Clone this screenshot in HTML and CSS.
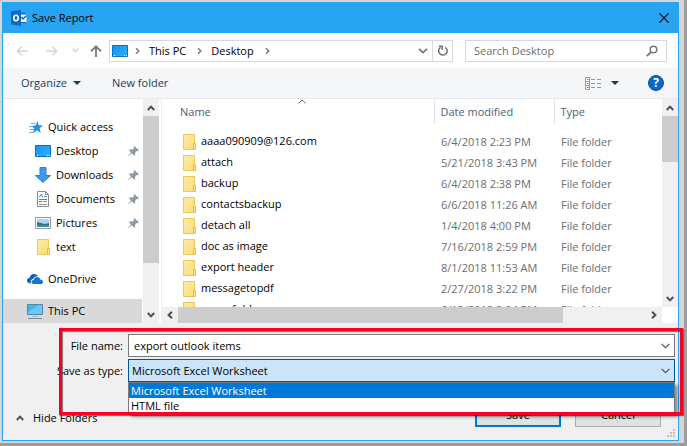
FILE: index.html
```
<!DOCTYPE html>
<html lang="en">
<head>
  <meta charset="UTF-8">
  <meta name="viewport" content="width=device-width, initial-scale=1.0">
  <title>Save Report</title>
  <link rel="stylesheet" href="styles.css">
</head>
<body>
  <!-- Shared icons -->
  <svg class="sprite" aria-hidden="true">
    <defs>
      <linearGradient id="folderFill" x1="0" y1="0" x2="1" y2="1">
        <stop offset="0" stop-color="#ffeba6"/>
        <stop offset="1" stop-color="#fbdc78"/>
      </linearGradient>
      <linearGradient id="screenFill" x1="0" y1="0" x2="1" y2="1">
        <stop offset="0" stop-color="#1793f3"/>
        <stop offset="1" stop-color="#2fb0ff"/>
      </linearGradient>
    </defs>
    <symbol id="folder" viewBox="0 0 13 16">
      <path d="M.5 .5h11v15H.5z" fill="url(#folderFill)" stroke="#ecc75a"/>
      <path d="M10.5 9.5h2v6h-2z" fill="#fde79c" stroke="#e8bd45"/>
    </symbol>
    <symbol id="desktop" viewBox="0 0 16 12">
      <path d="M.5 .5h15v11H.5z" fill="url(#screenFill)" stroke="#0b72bd"/>
      <path d="M2 10.5h1M12 10.5h1M14 10.5h1" stroke="#fff"/>
    </symbol>
    <symbol id="pin" viewBox="0 0 12 12">
      <path d="M7 0l5 5-1.500.600-.8-.3-2 2 .1 2.200-1 1L4 7.800 0 11.500 .3 10.500 3.300 7 1 4.700l1-1 2.700.2 2-2-.3-.8z" fill="#8b9aa6"/>
    </symbol>
    <symbol id="up" viewBox="0 0 8 6">
      <path d="M.8 5L4 1.600 7.200 5" fill="none" stroke="#505050" stroke-width="2"/>
    </symbol>
    <symbol id="down" viewBox="0 0 8 6">
      <path d="M.8 1L4 4.400 7.200 1" fill="none" stroke="#505050" stroke-width="2"/>
    </symbol>
    <symbol id="left" viewBox="0 0 6 8">
      <path d="M5 .8L1.600 4 5 7.200" fill="none" stroke="#505050" stroke-width="2"/>
    </symbol>
    <symbol id="right" viewBox="0 0 6 8">
      <path d="M1 .8L4.400 4 1 7.200" fill="none" stroke="#505050" stroke-width="2"/>
    </symbol>
    <symbol id="crumb" viewBox="0 0 5 6">
      <path d="M1 .3L3.800 3 1 5.700" fill="none" stroke="#777" stroke-width="1.500"/>
    </symbol>
    <symbol id="caret" viewBox="0 0 8 4">
      <path d="M0 0h8L4 4z" fill="#1d3557"/>
    </symbol>
    <symbol id="thin-down" viewBox="0 0 9 6">
      <path d="M.6 .8l3.900 3.900L8.400 .8" fill="none" stroke="#555" stroke-width="1.200"/>
    </symbol>
  </svg>

  <div class="backdrop">
    <div class="window">
      <header class="titlebar">
        <svg class="app-icon" width="16" height="16" viewBox="0 0 16 16">
          <path d="M8 3h7.500v10H8z" fill="#fff"/>
          <path d="M8 3h7.500v1.500H8zM8 12h7.500v1H8z" fill="#0a64b4"/>
          <path d="M10.500 7l1.500 2 3.500-3.500" fill="none" stroke="#0a64b4" stroke-width="1.400"/>
          <path d="M0 1.500L10 0v16L0 14.500z" fill="#0a6cc0"/>
          <ellipse cx="5" cy="8" rx="2.200" ry="2.700" fill="none" stroke="#fff" stroke-width="1.600"/>
        </svg>
        <h1>Save Report</h1>
        <button class="close" type="button" aria-label="Close">
          <svg width="10" height="10" viewBox="0 0 10 10"><path d="M0 0l10 10M10 0L0 10" stroke="#111" stroke-width="1.200"/></svg>
        </button>
      </header>

      <nav class="navbar">
        <button class="nav-btn" type="button" aria-label="Back">
          <svg width="12" height="10" viewBox="0 0 12 10"><path d="M12 5H1.500M5.500 .8L1.300 5l4.200 4.200" fill="none" stroke="#d6d6d6" stroke-width="1.600"/></svg>
        </button>
        <button class="nav-btn forward" type="button" aria-label="Forward">
          <svg width="12" height="10" viewBox="0 0 12 10"><path d="M0 5h10.500M6.500 .8L10.700 5 6.500 9.200" fill="none" stroke="#d6d6d6" stroke-width="1.600"/></svg>
        </button>
        <button class="nav-btn recent" type="button" aria-label="Recent locations">
          <svg width="7" height="5" viewBox="0 0 7 5"><path d="M.6 .8l2.900 2.900L6.400 .8" fill="none" stroke="#d0d0d0" stroke-width="1.400"/></svg>
        </button>
        <button class="nav-btn" type="button" aria-label="Up">
          <svg width="12" height="12" viewBox="0 0 12 12"><path d="M6 12V1.500M1 6.300L6 1.300l5 5" fill="none" stroke="#777" stroke-width="1.800"/></svg>
        </button>
        <div class="address">
          <svg width="16" height="12"><use href="#desktop"/></svg>
          <svg width="5" height="6"><use href="#crumb"/></svg>
          <a href="#">This PC</a>
          <svg width="5" height="6"><use href="#crumb"/></svg>
          <a href="#">Desktop</a>
          <svg width="5" height="6"><use href="#crumb"/></svg>
          <button class="history" type="button" aria-label="Previous locations">
            <svg width="10" height="6" viewBox="0 0 10 6"><path d="M1 .8l4 3.800L9 .8" fill="none" stroke="#777" stroke-width="1.800"/></svg>
          </button>
          <button class="refresh" type="button" aria-label="Refresh">
            <svg width="10" height="11" viewBox="0 0 10 11"><path d="M7.200 2.300A4.200 4.200 0 1 1 2.500 2.400M1 1.200h3.200v3.500" fill="none" stroke="#777" stroke-width="1.600"/></svg>
          </button>
        </div>
        <div class="search">
          <input type="text" placeholder="Search Desktop" aria-label="Search Desktop">
          <svg width="12" height="12" viewBox="0 0 12 12"><circle cx="7.500" cy="4.500" r="3.300" fill="none" stroke="#777" stroke-width="1.500"/><path d="M5 7L.8 11.200" stroke="#777" stroke-width="1.900"/></svg>
        </div>
      </nav>

      <div class="toolbar">
        <button class="organize" type="button">Organize <svg width="8" height="4"><use href="#caret"/></svg></button>
        <button type="button">New folder</button>
        <button class="view" type="button" aria-label="Change your view">
          <svg width="17" height="13" viewBox="0 0 17 13">
            <path d="M.5 .5h4v12h-4z" fill="#fff" stroke="#999"/>
            <path d="M.5 4.500h4M.5 8.500h4" stroke="#999"/>
            <path d="M2 2.500h1.500" stroke="#4f9a68"/><path d="M2 6.500h1.500" stroke="#2d7df0"/><path d="M2 10.500h1.500" stroke="#e02c2c"/>
            <path d="M6 2.500h4M12 2.500h4M6 6.500h4M12 6.500h4M6 10.500h4M12 10.500h4" stroke="#999"/>
          </svg>
          <svg width="8" height="4"><use href="#caret"/></svg>
        </button>
        <button class="help" type="button" aria-label="Help">?</button>
      </div>

      <main class="browser">
        <ul class="tree">
          <li class="top"><svg width="14" height="13" viewBox="0 0 14 13"><path d="M8.500 0l1.200 4.200L14 4.400l-3.400 2.800 1.200 4.800L8 9.300 4 12.600l1.300-4.800L2.500 5l4-.5z" fill="#1e90e8"/><path d="M2 2.500h4M0 5.500h4M1 8.500h4M0 11.500h4" stroke="#5bb2f0"/></svg>Quick access</li>
          <li><svg width="16" height="12"><use href="#desktop"/></svg>Desktop<svg class="pin" width="11" height="11"><use href="#pin"/></svg></li>
          <li><svg width="16" height="16" viewBox="0 0 16 16"><path d="M5 .5h6v8h4.500L8 15.500 .5 8.500H5z" fill="#3f98e8" stroke="#2d80cf"/></svg>Downloads<svg class="pin" width="11" height="11"><use href="#pin"/></svg></li>
          <li><svg width="16" height="16" viewBox="0 0 16 16"><path d="M2.500 .5h8l3 3v12h-11z" fill="#fff" stroke="#8a8a8a"/><path d="M10.500 .5v3h3" fill="none" stroke="#8a8a8a"/><path d="M4 6.500L6.500 3l1 3.500M9 5.500h3M4 8.500h8M4 10.500h3" fill="none" stroke="#2f8fd0"/><path d="M8 10.500h4M4 13.500h8" stroke="#909090"/></svg>Documents<svg class="pin" width="11" height="11"><use href="#pin"/></svg></li>
          <li><svg width="16" height="12" viewBox="0 0 16 12"><path d="M.5 .5h15v11H.5z" fill="#fff" stroke="#999"/><path d="M2 2h12v8H2z" fill="#a9d8f5"/><path d="M2 5l4 1 4 1 4-1v4H2z" fill="#38746e"/><path d="M2 8h7l5 .5V10H2z" fill="#3d8cc0"/></svg>Pictures<svg class="pin" width="11" height="11"><use href="#pin"/></svg></li>
          <li><svg class="tree-folder" width="13" height="16"><use href="#folder"/></svg>text</li>
          <li class="top group"><svg width="16" height="10" viewBox="0 0 16 10"><path d="M4 9.500C1 9.500 0 8 0 6.500S1 4 2.500 4C3 1.500 5 0 7 0c2 0 3.500 1 4.200 2.500C9 2 7 3 6 5 4 5 3.200 7.500 4 9.500z" fill="#0c5fb5"/><path d="M6.800 10C5 10 4.500 9 4.500 8S5.300 6 6.600 6C7 4 8.500 3 10 3c2 0 3 1.200 3.300 2.500C15 5.600 16 6.600 16 8s-1 2-2.200 2z" fill="#1474d4"/></svg>OneDrive</li>
          <li class="top group selected"><svg width="16" height="15" viewBox="0 0 16 15"><path d="M.5 .5h15v10H.5z" fill="#42b4f3" stroke="#5d8199"/><path d="M1 8L12 1h3v9H1z" fill="#68c8f8"/><path d="M5 12.500h6" stroke="#a3bccc"/><path d="M1 14.500h14" stroke="#6e8fa5"/></svg>This PC</li>
        </ul>
        <div class="scroll-v tree-scroll">
          <span class="arrow"><svg width="8" height="6"><use href="#up"/></svg></span>
          <span class="thumb"></span>
          <span class="arrow"><svg width="8" height="6"><use href="#down"/></svg></span>
        </div>

        <section class="files">
          <div class="file-list">
            <table>
              <colgroup><col><col class="col-date"><col class="col-type"></colgroup>
              <thead>
                <tr>
                  <th>Name<svg class="sort" width="8" height="5" viewBox="0 0 8 5"><path d="M.4 4.500L4 .9l3.600 3.600" fill="none" stroke="#666"/></svg></th>
                  <th>Date modified</th>
                  <th>Type</th>
                </tr>
              </thead>
              <tbody>
                <tr><td><svg width="13" height="16"><use href="#folder"/></svg>aaaa090909@126.com</td><td>6/4/2018 2:23 PM</td><td>File folder</td></tr>
                <tr><td><svg width="13" height="16"><use href="#folder"/></svg>attach</td><td>5/21/2018 3:43 PM</td><td>File folder</td></tr>
                <tr><td><svg width="13" height="16"><use href="#folder"/></svg>backup</td><td>6/4/2018 2:38 PM</td><td>File folder</td></tr>
                <tr><td><svg width="13" height="16"><use href="#folder"/></svg>contactsbackup</td><td>6/6/2018 11:26 AM</td><td>File folder</td></tr>
                <tr><td><svg width="13" height="16"><use href="#folder"/></svg>detach all</td><td>1/4/2018 4:00 PM</td><td>File folder</td></tr>
                <tr><td><svg width="13" height="16"><use href="#folder"/></svg>doc as image</td><td>7/16/2018 2:59 PM</td><td>File folder</td></tr>
                <tr><td><svg width="13" height="16"><use href="#folder"/></svg>export header</td><td>8/1/2018 11:53 AM</td><td>File folder</td></tr>
                <tr><td><svg width="13" height="16"><use href="#folder"/></svg>messagetopdf</td><td>2/27/2018 3:22 PM</td><td>File folder</td></tr>
                <tr><td><svg width="13" height="16"><use href="#folder"/></svg>some folder</td><td>6/13/2018 3:04 PM</td><td>File folder</td></tr>
              </tbody>
            </table>
          </div>
          <div class="scroll-v">
            <span class="arrow"><svg width="8" height="6"><use href="#up"/></svg></span>
            <span class="thumb"></span>
            <span class="arrow"><svg width="8" height="6"><use href="#down"/></svg></span>
          </div>
          <div class="scroll-h">
            <span class="arrow"><svg width="6" height="8"><use href="#left"/></svg></span>
            <span class="thumb"></span>
            <span class="arrow"><svg width="6" height="8"><use href="#right"/></svg></span>
          </div>
        </section>
      </main>

      <form class="save-form">
        <div class="field">
          <label for="fileName">File name:</label>
          <div class="control">
            <input type="text" id="fileName" value="export outlook items">
            <svg width="9" height="6"><use href="#thin-down"/></svg>
          </div>
        </div>
        <div class="field">
          <label for="fileType">Save as type:</label>
          <div class="control">
            <select id="fileType">
              <option selected>Microsoft Excel Worksheet</option>
              <option>HTML file</option>
            </select>
            <svg width="9" height="6"><use href="#thin-down"/></svg>
            <ul class="options" role="listbox" aria-label="Save as type">
              <li class="active" role="option" aria-selected="true">Microsoft Excel Worksheet</li>
              <li role="option" aria-selected="false">HTML file</li>
            </ul>
          </div>
        </div>
        <div class="actions">
          <button class="hide-folders" type="button"><svg width="8" height="6"><use href="#up"/></svg>Hide Folders</button>
          <button class="btn btn-default" type="submit">Save</button>
          <button class="btn" type="button">Cancel</button>
        </div>
        <div class="highlight"></div>
        <svg class="grip" width="8" height="8" viewBox="0 0 8 8"><path d="M6 0h2v2H6zM3 3h2v2H3zM6 3h2v2H6zM0 6h2v2H0zM3 6h2v2H3zM6 6h2v2H6z" fill="#bfbfbf"/></svg>
      </form>
    </div>
  </div>
</body>
</html>
```

FILE: styles.css
```
* {
  margin: 0;
  padding: 0;
  box-sizing: border-box;
}

body {
  font-family: "Open Sans", "Segoe UI", sans-serif;
  font-size: 11px;
  line-height: 16px;
  color: #000;
  background: #9c9c9c;
}

svg {
  display: block;
  flex: none;
}

.sprite {
  position: absolute;
  width: 0;
  height: 0;
}

button,
input,
select {
  font: inherit;
  color: inherit;
  background: none;
  border: none;
  outline: none;
}

ul {
  list-style: none;
}

.backdrop {
  height: 100vh;
  padding: 2px 5px 2px 2px;
  background: #d4d6d8;
  border-right: 3px solid #a0a0a0;
  border-bottom: 3px solid #9c9c9c;
}

.window {
  height: 100%;
  display: flex;
  flex-direction: column;
  background: #fff;
  border: 1px solid #27a5f3;
}

/* Title bar */
.titlebar {
  display: flex;
  align-items: center;
  height: 30px;
  flex: none;
  padding: 0 9px 0 8px;
  background: #27a5f3;
}

.titlebar h1 {
  flex: 1;
  margin-left: 5px;
  font-size: 11px;
  font-weight: 400;
}

.close {
  display: flex;
}

/* Navigation row */
.navbar {
  display: flex;
  align-items: center;
  height: 35px;
  flex: none;
  padding: 0 11px 0 13px;
}

.nav-btn {
  display: flex;
}

.forward {
  margin-left: 18px;
}

.recent {
  margin: 0 11px 0 14px;
}

.address {
  display: flex;
  align-items: center;
  flex: 1;
  height: 22px;
  margin: 0 12px 0 7px;
  padding-left: 2px;
  border: 1px solid #d9d9d9;
}

.address a {
  margin: 0 11px 0 9px;
  color: #000;
  text-decoration: none;
}

.address svg + svg {
  margin-left: 7px;
}

.history {
  display: flex;
  margin: 0 4px 0 auto;
}

.refresh {
  display: flex;
  align-items: center;
  justify-content: center;
  width: 20px;
  height: 100%;
  border-left: 1px solid #d9d9d9;
}

.search {
  display: flex;
  align-items: center;
  width: 202px;
  height: 22px;
  padding: 0 8px;
  border: 1px solid #d9d9d9;
}

.search input {
  flex: 1;
  min-width: 0;
}

.search input::placeholder {
  color: #6d6d6d;
  opacity: 1;
}

/* Command bar */
.toolbar {
  display: flex;
  align-items: center;
  height: 31px;
  flex: none;
  padding: 0 14px 0 18px;
  background: #f5f6f7;
  border-bottom: 1px solid #e6e8ea;
  color: #1e395b;
}

.toolbar button {
  display: flex;
  align-items: center;
}

.organize {
  gap: 6px;
  margin-right: 31px;
}

.view {
  gap: 9px;
  margin-left: auto;
}

.toolbar .help {
  justify-content: center;
  width: 16px;
  height: 16px;
  margin-left: 29px;
  border-radius: 50%;
  background: #0a68c7;
  border: 1px solid #0552a0;
  color: #fff;
  font-size: 12px;
  font-weight: 700;
}

/* Folder tree and file list */
.browser {
  display: flex;
  flex: 1;
  min-height: 0;
}

.tree {
  width: 140px;
  flex: none;
  padding-top: 16px;
}

.tree li {
  display: flex;
  align-items: center;
  gap: 5px;
  height: 24px;
  padding: 0 4px 0 32px;
}

.tree li.top {
  padding-left: 24px;
}

.tree li.top:first-child {
  padding-left: 26px;
}

.tree .group {
  margin-top: 8px;
}

.tree .selected {
  background: #d9d9d9;
  margin-right: 1px;
}

.tree .pin {
  margin-left: auto;
}

.tree-folder {
  margin: 0 1px 0 2px;
}

.scroll-v {
  display: flex;
  flex-direction: column;
  width: 16px;
  flex: none;
  background: #f0f0f0;
}

.scroll-v .arrow,
.scroll-h .arrow {
  display: flex;
  align-items: center;
  justify-content: center;
  width: 16px;
  height: 17px;
}

.thumb {
  background: #cdcdcd;
}

.scroll-v .thumb {
  height: 46px;
}

.tree-scroll .thumb {
  height: 147px;
}

.scroll-v .arrow:last-child {
  margin-top: auto;
}

.files {
  display: grid;
  grid-template-columns: 1fr 16px;
  grid-template-rows: 1fr 16px;
  flex: 1;
  min-width: 0;
  margin-left: 2px;
  border-left: 1px solid #f0f0f0;
}

.file-list {
  min-height: 0;
  overflow: hidden;
}

.files table {
  width: 100%;
  table-layout: fixed;
  border-collapse: collapse;
}

.col-date {
  width: 120px;
}

.col-type {
  width: 108px;
}

.files th {
  position: relative;
  height: 25px;
  padding-left: 6px;
  border-left: 1px solid #e3e3e3;
  color: #4c607a;
  font-weight: 400;
  text-align: left;
}

.files th:first-child {
  padding-left: 18px;
  border-left: none;
}

.sort {
  position: absolute;
  top: 0;
  left: 50%;
}

.files tbody::before {
  content: "";
  display: block;
  height: 7px;
}

.files td {
  height: 21px;
  padding-left: 7px;
  color: #6d6d6d;
  white-space: nowrap;
}

.files td:first-child {
  padding-left: 21px;
  color: #000;
}

.files td svg {
  display: inline-block;
  margin-right: 5px;
  vertical-align: middle;
}

.scroll-h {
  display: flex;
  background: #f0f0f0;
}

.scroll-h .arrow {
  height: 16px;
}

.scroll-h .thumb {
  width: 77%;
}

.scroll-h .arrow:last-child {
  margin-left: auto;
}

/* Save form */
.save-form {
  position: relative;
  flex: none;
  padding: 11px 3px 13px 13px;
  background: #f0f0f0;
}

.field {
  display: flex;
  align-items: center;
  margin-bottom: 2px;
}

.field label {
  width: 107px;
  text-align: right;
}

.control {
  position: relative;
  flex: 1;
  margin-left: 5px;
}

.control input,
.control select {
  display: block;
  width: 100%;
  height: 23px;
  padding: 0 24px 0 5px;
  background: #fff;
  border: 1px solid #7a7a7a;
  appearance: none;
}

.control select {
  padding-left: 3px;
  background: #cce4f7;
  border-color: #005499;
}

.control > svg {
  position: absolute;
  top: 9px;
  right: 5px;
}

.options {
  position: absolute;
  z-index: 1;
  top: 100%;
  left: 0;
  right: 0;
  background: #fff;
  border: 1px solid #7a7a7a;
  box-shadow: 3px 3px 3px rgba(0, 0, 0, 0.4);
}

.options li {
  height: 15px;
  padding-left: 2px;
  line-height: 15px;
}

.options .active {
  background: #0078d7;
  color: #fff;
}

.actions {
  display: flex;
  align-items: center;
  gap: 14px;
  margin-top: 21px;
  padding-right: 14px;
}

.hide-folders {
  display: flex;
  align-items: center;
  gap: 9px;
  margin-top: 6px;
  margin-right: auto;
}

.btn {
  width: 86px;
  height: 24px;
  background: #e1e1e1;
  border: 1px solid #adadad;
}

.btn-default {
  border: 2px solid #0078d7;
}

.highlight {
  position: absolute;
  z-index: 2;
  top: 5px;
  right: -5px;
  bottom: 25px;
  left: 56px;
  border: 3px solid #fb0020;
  box-shadow: 1px 1px 1px rgba(0, 0, 0, 0.5), inset 1px 1px 1px rgba(0, 0, 0, 0.5);
  pointer-events: none;
}

.grip {
  position: absolute;
  right: 3px;
  bottom: 3px;
}
```
